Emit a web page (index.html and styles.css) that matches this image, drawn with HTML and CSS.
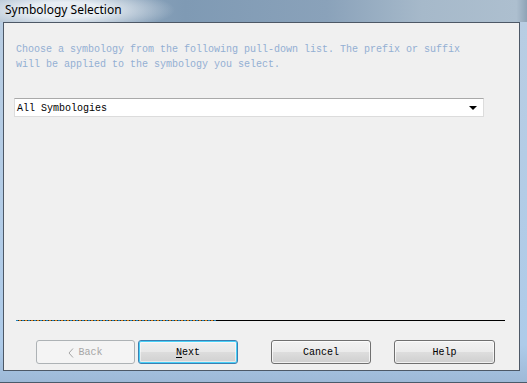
FILE: index.html
```html
<!DOCTYPE html>
<html lang="en">
<head>
    <meta charset="UTF-8">
    <title>Symbology Selection</title>
    <link rel="stylesheet" href="styles.css">
</head>
<body>
    <div class="window">
        <!-- Title bar -->
        <div class="titlebar">Symbology Selection</div>

        <!-- Client area -->
        <div class="client">
            <p class="intro">Choose a symbology from the following pull-down list. The prefix or suffix<br>will be applied to the symbology you select.</p>

            <div class="dropdown">
                <span>All Symbologies</span>
                <span class="arrow"></span>
            </div>

            <div class="separator">
                <div class="dashed"></div>
                <div class="solid"></div>
            </div>

            <div class="buttons">
                <button class="btn back" disabled>
                    <svg width="6" height="10" viewBox="0 0 6 10"><path d="M5 0.5 L1 5 L5 9.5" fill="none" stroke="#a6a6a6" stroke-width="1"/></svg>
                    Back
                </button>
                <button class="btn next"><u>N</u>ext</button>
                <button class="btn cancel">Cancel</button>
                <button class="btn help">Help</button>
            </div>
        </div>
    </div>
</body>
</html>
```

FILE: styles.css
```css
/* window frame */
body {
    margin: 0;
    width: 527px;
    height: 383px;
    overflow: hidden;
    background: linear-gradient(180deg, #b9cde2 0%, #aecbe9 90%, #9db8d6 100%);
    font-family: "Liberation Mono", monospace;
}

.window {
    display: flex;
    flex-direction: column;
    height: 383px;
    border-bottom: 1px solid #4a5a6a;
    box-sizing: border-box;
}

.titlebar {
    height: 22px;
    line-height: 20px;
    padding-left: 5px;
    font-family: "Noto Sans", sans-serif;
    font-size: 12px;
    color: #000;
    background:
        radial-gradient(ellipse 110px 22px at 65px 10px, rgba(236, 241, 246, 0.95) 35%, rgba(236, 241, 246, 0) 100%),
        linear-gradient(90deg, #a2b6c9 0%, #7f9ab4 35%, #8aa2ba 62%, #a6b9ca 80%, #adbfcf 98%, #8fa3b6 100%);
}

.client {
    margin: 0 7px 0 3px;
    height: 349px;
    box-sizing: border-box;
    border: 1px solid #4d5866;
    background: #f0f0f0;
    padding: 19px 0 0 12px;
}

.intro {
    margin: 0;
    font-size: 10px;
    line-height: 15px;
    color: #93afd3;
}

.dropdown {
    margin: 26px 0 0 -2px;
    width: 470px;
    height: 19px;
    box-sizing: border-box;
    background: #fff;
    border: 1px solid #dcdcdc;
    border-top-color: #a9a9a9;
    display: flex;
    align-items: center;
    justify-content: space-between;
    padding: 1px 6px 0 2px;
    font-size: 10px;
    color: #000;
}

.arrow {
    width: 0;
    height: 0;
    border-left: 4px solid transparent;
    border-right: 4px solid transparent;
    border-top: 4px solid #000;
}

.separator {
    display: flex;
    margin-top: 203px;
    width: 489px;
    height: 1px;
}

/* dotted focus-style segment */
.dashed {
    width: 200px;
    background: repeating-linear-gradient(90deg, #2386bd 0 2px, #2a2a2a 2px 3px, #d9861c 3px 5px, #2a2a2a 5px 6px);
}

.solid {
    flex: 1;
    background: #000;
}

.buttons {
    display: flex;
    margin-top: 19px;
    padding-left: 20px;
}

.btn {
    width: 100px;
    height: 24px;
    padding: 1px 0 0;
    font-family: "Liberation Mono", monospace;
    font-size: 10px;
    color: #000;
    border: 1px solid #707070;
    border-radius: 3px;
    background: linear-gradient(180deg, #f2f2f2 0%, #ebebeb 48%, #dddddd 52%, #cfcfcf 100%);
    box-shadow: inset 0 0 0 1px rgba(255, 255, 255, 0.7);
}

.btn u {
    text-underline-offset: 2px;
}

.back {
    width: 99px;
    color: #a6a6a6;
    border-color: #adb2b5;
    background: #f4f4f4;
    box-shadow: none;
    display: flex;
    align-items: center;
    justify-content: center;
    gap: 4px;
}

.next {
    margin-left: 3px;
    border-color: #3c7fb1;
    background: linear-gradient(180deg, #f0f0f0 0%, #e8e8e8 48%, #dcdcdc 52%, #d0d0d0 100%);
    box-shadow: inset 0 0 0 1px #48d0f8, inset 0 0 0 2px rgba(255, 255, 255, 0.5);
}

.cancel {
    margin-left: 33px;
}

.help {
    margin-left: 23px;
    width: 101px;
}
```
